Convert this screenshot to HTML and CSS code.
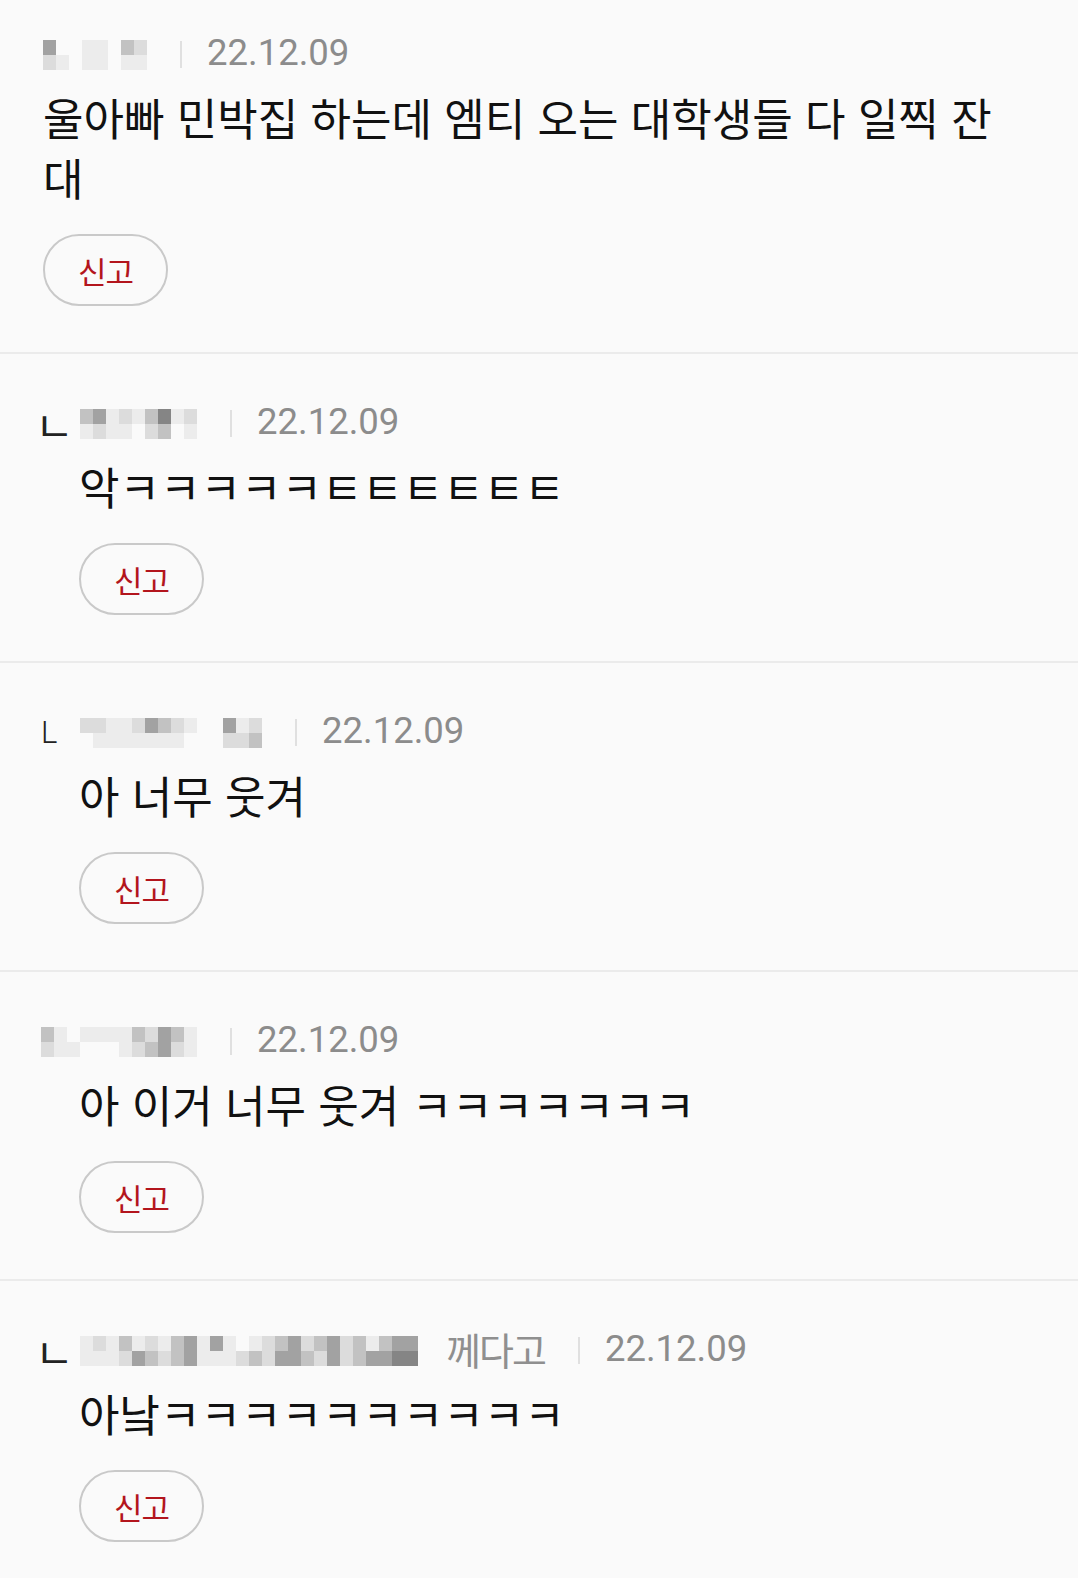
FILE: index.html
```
<!DOCTYPE html>
<html lang="ko">
<head>
  <meta charset="UTF-8">
  <meta name="viewport" content="width=device-width, initial-scale=1.0">
  <title>댓글</title>
  <link rel="stylesheet" href="styles.css">
</head>
<body>

<div class="comentarios">

  <div class="comentario">
    <div class="cabecalho">
      <div class="mosaico">
        <i class="t4"></i><i class="t2"></i>
        <i class="t0"></i><i class="t1"></i>
        <i class="t0"></i><i class="t0"></i>
        <i class="t1"></i><i class="t1"></i>
        <i class="t1"></i><i class="t1"></i>
        <i class="t0"></i><i class="t0"></i>
        <i class="t3"></i><i class="t1"></i>
        <i class="t2"></i><i class="t1"></i>
      </div>
      <span class="divisor"></span>
      <span class="data">22.12.09</span>
    </div>
    <p class="texto">울아빠 민박집 하는데 엠티 오는 대학생들 다 일찍 잔대</p>
    <button class="botao-denuncia">신고</button>
  </div>

  <div class="comentario resposta">
    <div class="cabecalho">
      <span class="marca">ㄴ</span>
      <div class="mosaico">
        <i class="t3"></i><i class="t1"></i>
        <i class="t4"></i><i class="t2"></i>
        <i class="t1"></i><i class="t1"></i>
        <i class="t2"></i><i class="t1"></i>
        <i class="t1"></i><i class="t0"></i>
        <i class="t3"></i><i class="t2"></i>
        <i class="t5"></i><i class="t3"></i>
        <i class="t1"></i><i class="t0"></i>
        <i class="t2"></i><i class="t1"></i>
      </div>
      <span class="divisor"></span>
      <span class="data">22.12.09</span>
    </div>
    <p class="texto">악ㅋㅋㅋㅋㅋㅌㅌㅌㅌㅌㅌ</p>
    <button class="botao-denuncia">신고</button>
  </div>

  <div class="comentario resposta">
    <div class="cabecalho">
      <span class="marca marca-l">L</span>
      <div class="mosaico">
        <i class="t2"></i><i class="t0"></i>
        <i class="t2"></i><i class="t1"></i>
        <i class="t1"></i><i class="t1"></i>
        <i class="t1"></i><i class="t1"></i>
        <i class="t2"></i><i class="t1"></i>
        <i class="t4"></i><i class="t1"></i>
        <i class="t3"></i><i class="t1"></i>
        <i class="t2"></i><i class="t1"></i>
        <i class="t1"></i><i class="t0"></i>
        <i class="t0"></i><i class="t0"></i>
        <i class="t0"></i><i class="t0"></i>
        <i class="t4"></i><i class="t2"></i>
        <i class="t1"></i><i class="t2"></i>
        <i class="t2"></i><i class="t3"></i>
      </div>
      <span class="divisor"></span>
      <span class="data">22.12.09</span>
    </div>
    <p class="texto">아 너무 웃겨</p>
    <button class="botao-denuncia">신고</button>
  </div>

  <div class="comentario resposta">
    <div class="cabecalho">
      <div class="mosaico">
        <i class="t3"></i><i class="t2"></i>
        <i class="t1"></i><i class="t1"></i>
        <i class="t0"></i><i class="t1"></i>
        <i class="t1"></i><i class="t0"></i>
        <i class="t1"></i><i class="t0"></i>
        <i class="t1"></i><i class="t0"></i>
        <i class="t1"></i><i class="t1"></i>
        <i class="t3"></i><i class="t2"></i>
        <i class="t2"></i><i class="t3"></i>
        <i class="t4"></i><i class="t4"></i>
        <i class="t3"></i><i class="t2"></i>
        <i class="t1"></i><i class="t1"></i>
      </div>
      <span class="divisor"></span>
      <span class="data">22.12.09</span>
    </div>
    <p class="texto">아 이거 너무 웃겨 ㅋㅋㅋㅋㅋㅋㅋ</p>
    <button class="botao-denuncia">신고</button>
  </div>

  <div class="comentario resposta">
    <div class="cabecalho">
      <span class="marca">ㄴ</span>
      <div class="mosaico">
        <i class="t1"></i><i class="t1"></i>
        <i class="t2"></i><i class="t1"></i>
        <i class="t1"></i><i class="t1"></i>
        <i class="t3"></i><i class="t2"></i>
        <i class="t1"></i><i class="t4"></i>
        <i class="t2"></i><i class="t3"></i>
        <i class="t1"></i><i class="t2"></i>
        <i class="t3"></i><i class="t3"></i>
        <i class="t4"></i><i class="t4"></i>
        <i class="t1"></i><i class="t1"></i>
        <i class="t4"></i><i class="t1"></i>
        <i class="t1"></i><i class="t1"></i>
        <i class="t0"></i><i class="t2"></i>
        <i class="t1"></i><i class="t3"></i>
        <i class="t2"></i><i class="t2"></i>
        <i class="t3"></i><i class="t4"></i>
        <i class="t4"></i><i class="t4"></i>
        <i class="t2"></i><i class="t3"></i>
        <i class="t3"></i><i class="t2"></i>
        <i class="t4"></i><i class="t4"></i>
        <i class="t2"></i><i class="t2"></i>
        <i class="t3"></i><i class="t3"></i>
        <i class="t1"></i><i class="t4"></i>
        <i class="t3"></i><i class="t4"></i>
        <i class="t4"></i><i class="t5"></i>
        <i class="t4"></i><i class="t5"></i>
      </div>
      <span class="nome-final">께다고</span>
      <span class="divisor"></span>
      <span class="data">22.12.09</span>
    </div>
    <p class="texto">아낰ㅋㅋㅋㅋㅋㅋㅋㅋㅋㅋ</p>
    <button class="botao-denuncia">신고</button>
  </div>

</div>

</body>
</html>
```

FILE: styles.css
```
body {
  margin: 0;
  padding: 0;
  background-color: #fafafa;
  font-family: "Noto Sans CJK KR", "Noto Sans", sans-serif;
  color: #111;
}

.comentarios {
  display: flex;
  flex-direction: column;
}

.comentario {
  padding: 46px 60px 46px 43px;
  border-bottom: 2px solid #ebebeb;
}

.comentario:first-child {
  padding-top: 31px;
}

.comentario:last-child {
  border-bottom: none;
}

.resposta {
  padding-left: 41px;
}

.cabecalho {
  display: flex;
  align-items: center;
  height: 44px;
}

.marca {
  width: 45px;
  margin-left: -6px;
  margin-top: 4px;
  font-size: 42px;
  line-height: 44px;
  color: #222;
}

.marca-l {
  width: 39px;
  margin-left: 0;
  font-family: Roboto, "Noto Sans", sans-serif;
  font-weight: 300;
  font-size: 31px;
}

/* nickname is pixelated in the original */
.mosaico {
  display: grid;
  grid-template-rows: 15px 15px;
  grid-auto-flow: column;
  grid-auto-columns: 13px;
  filter: blur(0.7px);
  margin-top: 4px;
}

.mosaico i { display: block; }
.t0 { background-color: transparent; }
.t1 { background-color: #ececec; }
.t2 { background-color: #dcdcdc; }
.t3 { background-color: #c2c2c2; }
.t4 { background-color: #a2a2a2; }
.t5 { background-color: #858585; }

.nome-final {
  margin-left: 28px;
  font-size: 38px;
  line-height: 44px;
  color: #8f8f8f;
  letter-spacing: -2px;
}

.divisor {
  width: 2px;
  height: 27px;
  margin: 3px 25px 0 33px;
  background-color: #e0e0e0;
}

.data {
  font-family: Roboto, "Noto Sans", sans-serif;
  font-size: 36.5px;
  line-height: 44px;
  color: #8c8c8c;
}

.texto {
  margin: 12px 0 27px 0;
  font-size: 44px;
  line-height: 60px;
  color: #111;
}

.resposta .texto,
.resposta .botao-denuncia {
  margin-left: 38px;
}

.botao-denuncia {
  display: block;
  width: 125px;
  height: 72px;
  padding: 0;
  background-color: transparent;
  border: 2px solid #c9c9c9;
  border-radius: 36px;
  font-family: "Noto Sans CJK KR", sans-serif;
  font-size: 31px;
  letter-spacing: -1px;
  color: #b3151d;
  cursor: pointer;
}
```
